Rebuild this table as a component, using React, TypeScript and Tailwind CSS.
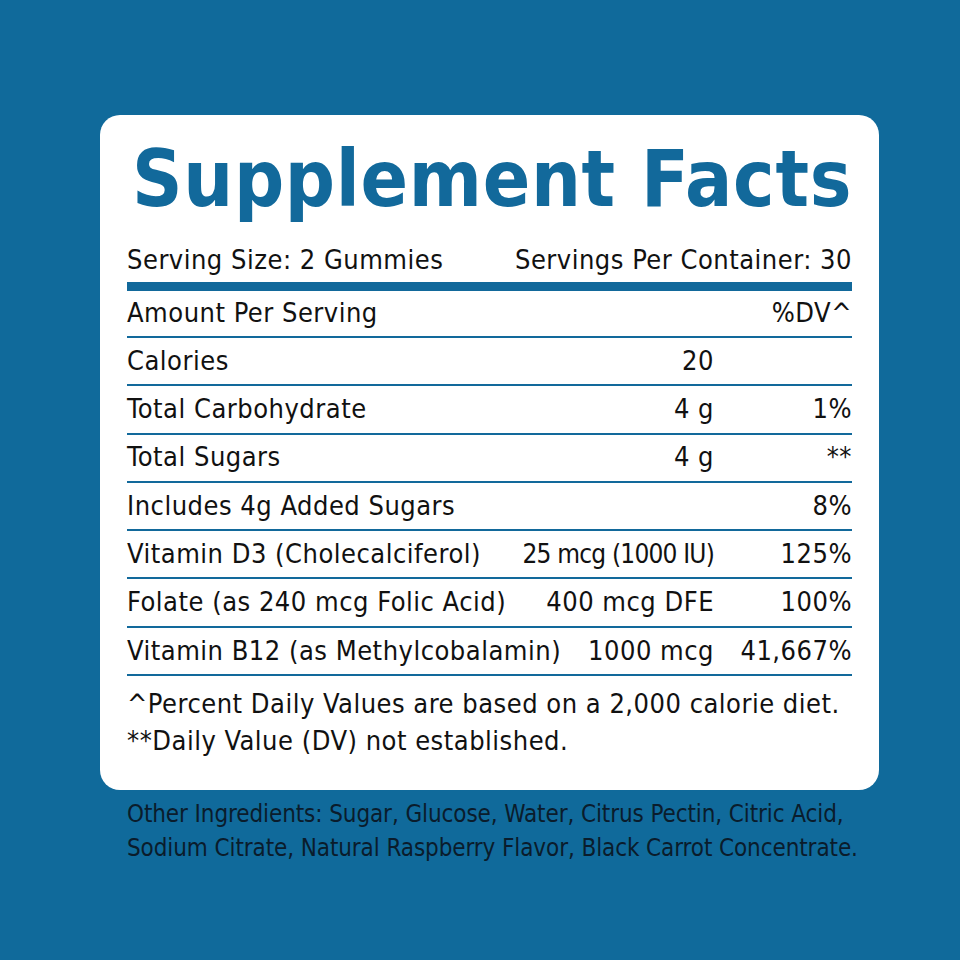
import React from 'react'

const rows = [
  { name: 'Calories', amount: '20', dv: '' },
  { name: 'Total Carbohydrate', amount: '4 g', dv: '1%' },
  { name: 'Total Sugars', amount: '4 g', dv: '**' },
  { name: 'Includes 4g Added Sugars', amount: '', dv: '8%' },
  { name: 'Vitamin D3 (Cholecalciferol)', amount: '25 mcg (1000 IU)', dv: '125%', narrow: true },
  { name: 'Folate (as 240 mcg Folic Acid)', amount: '400 mcg DFE', dv: '100%' },
  { name: 'Vitamin B12 (as Methylcobalamin)', amount: '1000 mcg', dv: '41,667%' },
]

export default function App() {
  return (
    <div
      className="w-[960px] h-[960px] bg-[#106a9b] pt-[115px] pl-[100px] text-[#111]"
      style={{ fontFamily: '"DejaVu Sans Condensed", "DejaVu Sans", sans-serif' }}
    >
      <div className="w-[779px] h-[675px] bg-white rounded-[20px] px-[27px] text-[27px] tracking-[0.5px]">
        {/* Title */}
        <h1 className="text-[78px] font-bold leading-none tracking-[0.7px] whitespace-nowrap text-[#12699b] pt-[25px] pl-[5px] h-[128px]">
          Supplement Facts
        </h1>
        <div className="flex justify-between leading-none h-[32px] items-center">
          <span>Serving Size: 2 Gummies</span>
          <span>Servings Per Container: 30</span>
        </div>
        <div className="h-[9px] bg-[#12699b] mt-[7px]" />
        <div className="flex justify-between items-center h-[47px] border-b-2 border-[#12699b]">
          <span>Amount Per Serving</span>
          <span>%DV^</span>
        </div>
        {rows.map(r => (
          <div
            key={r.name}
            className="flex items-center h-[48.3px] border-b-2 border-[#12699b]"
          >
            <span className="flex-1">{r.name}</span>
            <span className={r.narrow ? 'text-[26px] tracking-[-0.8px]' : ''}>{r.amount}</span>
            <span className="w-[138px] text-right">{r.dv}</span>
          </div>
        ))}
        {/* Footnotes */}
        <div className="leading-[37px] pt-[9px]">
          <p>^Percent Daily Values are based on a 2,000 calorie diet.</p>
          <p>**Daily Value (DV) not established.</p>
        </div>
      </div>
      <div className="text-[24px] leading-[34px] tracking-[-0.1px] text-[#0a1c2c] pl-[27px] pt-[7px]">
        <p>Other Ingredients: Sugar, Glucose, Water, Citrus Pectin, Citric Acid,</p>
        <p>Sodium Citrate, Natural Raspberry Flavor, Black Carrot Concentrate.</p>
      </div>
    </div>
  )
}
